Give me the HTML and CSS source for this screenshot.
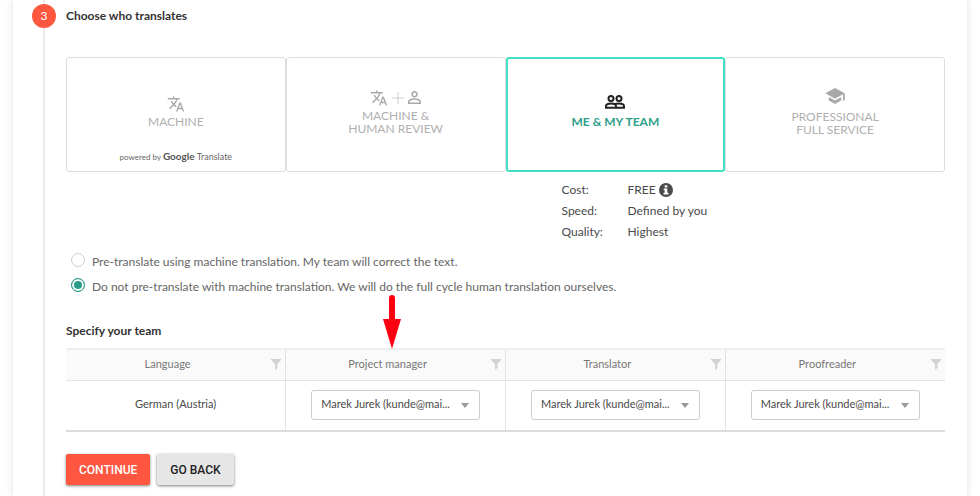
FILE: index.html
```html
<!DOCTYPE html>
<html lang="en">
<head>
    <meta charset="utf-8">
    <title>Choose who translates</title>
    <link rel="stylesheet" href="styles.css">
</head>
<body>
    <svg class="symbols" aria-hidden="true">
        <symbol id="icon-translate" viewBox="0 0 24 24">
            <path d="M12.87 15.07l-2.54-2.51.03-.03A17.5 17.5 0 0 0 14.07 6H17V4h-7V2H8v2H1v2h11.17C11.5 7.92 10.44 9.75 9 11.35 8.07 10.32 7.3 9.19 6.69 8h-2c.73 1.63 1.73 3.17 2.98 4.56l-5.09 5.02L4 19l5-5 3.11 3.11.76-2.04zM18.5 10h-2L12 22h2l1.12-3h4.75L21 22h2l-4.5-12zm-2.62 7l1.62-4.33L19.12 17h-3.24z"/>
        </symbol>
        <symbol id="icon-filter" viewBox="0 0 10 11">
            <path d="M0 0h10v1L6.500 5v4L4 11V5L0 1z"/>
        </symbol>
    </svg>
    <main class="panel">
        <section class="step">
            <span class="step-number">3</span>
            <h2 class="step-title">Choose who translates</h2>

            <div class="options">
                <button type="button" class="option">
                    <span class="option-icons">
                        <svg class="icon" viewBox="0 0 24 24"><use href="#icon-translate"/></svg>
                    </span>
                    <span>MACHINE</span>
                    <span class="powered">powered by <span class="google">Google</span> <span class="translate">Translate</span></span>
                </button>
                <button type="button" class="option">
                    <span class="option-icons">
                        <svg class="icon" viewBox="0 0 24 24"><use href="#icon-translate"/></svg>
                        <svg class="plus" viewBox="0 0 12 12"><path d="M6 0v12M0 6h12"/></svg>
                        <svg class="person" viewBox="4 4 16 16"><path d="M12 5.900a2.100 2.100 0 1 1 0 4.200 2.100 2.100 0 0 1 0-4.200m0 9c2.970 0 6.100 1.460 6.100 2.100v1.100H5.900V17c0-.64 3.130-2.100 6.100-2.100M12 4C9.790 4 8 5.790 8 8s1.790 4 4 4 4-1.790 4-4-1.790-4-4-4zm0 9c-2.670 0-8 1.340-8 4v3h16v-3c0-2.660-5.330-4-8-4z"/></svg>
                    </span>
                    <span>MACHINE &amp;<br>HUMAN REVIEW</span>
                </button>
                <button type="button" class="option selected" aria-pressed="true">
                    <span class="option-icons">
                        <svg class="people" viewBox="0 0 20 14">
                            <circle cx="6" cy="3.500" r="2.500"/>
                            <circle cx="14" cy="3.500" r="2.500"/>
                            <path d="M1 12.700v-1.500c0-1.500 2-2.700 5-2.700s5 1.200 5 2.700v1.500zM9.500 9.200c1-.5 2.500-.7 4.500-.7 3 0 5 1.200 5 2.700v1.500h-8"/>
                        </svg>
                    </span>
                    <span>ME &amp; MY TEAM</span>
                </button>
                <button type="button" class="option">
                    <span class="option-icons">
                        <svg class="cap" viewBox="1 3 22 18"><path d="M5 13.180v4L12 21l7-3.820v-4L12 17l-7-3.820zM12 3L1 9l11 6 9-4.910V17h2V9L12 3z"/></svg>
                    </span>
                    <span>PROFESSIONAL<br>FULL SERVICE</span>
                </button>

                <dl class="details">
                    <dt>Cost:</dt>
                    <dd>FREE <svg class="info" viewBox="0 0 14 14"><circle cx="7" cy="7" r="7"/><path d="M5.700 2.300h2.600v2.200H5.700zM4.700 5.500h3.600v4.300h1.200v1.700h-5V9.800h1.200V7.200h-1z"/></svg></dd>
                    <dt>Speed:</dt>
                    <dd>Defined by you</dd>
                    <dt>Quality:</dt>
                    <dd>Highest</dd>
                </dl>
            </div>

            <div class="choices">
                <label class="choice"><input type="radio" name="pretranslate"> Pre-translate using machine translation. My team will correct the text.</label>
                <label class="choice"><input type="radio" name="pretranslate" checked> Do not pre-translate with machine translation. We will do the full cycle human translation ourselves.</label>
            </div>

            <div class="team">
                <h3 class="team-title">Specify your team</h3>
                <svg class="pointer" viewBox="0 0 18 54"><path d="M9 3v24" stroke="#ff0010" stroke-width="6" stroke-linecap="round"/><path d="M0 24h18L9 54z" fill="#ff0010"/></svg>
                <table class="team-table">
                    <thead>
                        <tr>
                            <th><div class="head">Language <svg class="filter"><use href="#icon-filter"/></svg></div></th>
                            <th><div class="head"><span id="manager">Project manager</span> <svg class="filter"><use href="#icon-filter"/></svg></div></th>
                            <th><div class="head"><span id="translator">Translator</span> <svg class="filter"><use href="#icon-filter"/></svg></div></th>
                            <th><div class="head"><span id="proofreader">Proofreader</span> <svg class="filter"><use href="#icon-filter"/></svg></div></th>
                        </tr>
                    </thead>
                    <tbody>
                        <tr>
                            <td>German (Austria)</td>
                            <td><div class="picker"><select aria-labelledby="manager"><option>Marek Jurek (kunde@mai...</option></select></div></td>
                            <td><div class="picker"><select aria-labelledby="translator"><option>Marek Jurek (kunde@mai...</option></select></div></td>
                            <td><div class="picker"><select aria-labelledby="proofreader"><option>Marek Jurek (kunde@mai...</option></select></div></td>
                        </tr>
                    </tbody>
                </table>
            </div>

            <div class="actions">
                <button type="button" class="btn primary">CONTINUE</button>
                <button type="button" class="btn">GO BACK</button>
            </div>
        </section>
    </main>
</body>
</html>
```
FILE: styles.css
```css
* { box-sizing: border-box; }
body { margin: 0; font-family: Lato, "Liberation Sans", sans-serif; font-size: 12px; line-height: 16px; color: #4a4a4a; background: #fff; }
h2, h3, dl, dd { margin: 0; }
button, select { font-family: inherit; }
.symbols { display: none; }

.panel { min-height: 100vh; margin: 0 13px; padding: 0 22px 0 30px; background: #fff; box-shadow: 0 0 8px rgba(0, 0, 0, 0.12); }
.step { position: relative; min-height: 100vh; padding: 8px 0 8px 21px; border-left: 2px solid #ebebeb; }
.step-number { position: absolute; left: -13px; top: 4px; width: 24px; height: 24px; border-radius: 50%; background: #ff5640; color: #fff; line-height: 24px; text-align: center; }
.step-title, .team-title { font-size: 12px; line-height: 16px; font-weight: bold; color: #333; }

/* service options */
.options { display: grid; grid-template-columns: repeat(4, 1fr); margin-top: 33px; }
.option { position: relative; display: flex; flex-direction: column; align-items: center; justify-content: center; height: 115px; padding: 0 0 6px; background: #fff; border: 1px solid #ddd; border-radius: 3px; color: #b0b0b0; font-size: 12px; line-height: 13px; cursor: pointer; }
.option.selected { border: 2px solid #3fe0c3; color: #2f9f8b; font-weight: bold; }
.option-icons { display: flex; align-items: center; gap: 4px; margin-bottom: 2px; }
.option svg { fill: #a8aaaa; }
.icon { width: 18px; height: 18px; }
.person { width: 13px; height: 13px; }
.option .plus { width: 12px; height: 12px; stroke: #ccc; fill: none; }
.option .people { width: 20px; height: 14px; margin-bottom: 4px; fill: none; stroke: #222; stroke-width: 2; }
.cap { width: 20px; height: 16px; margin-bottom: 4px; }
.powered { position: absolute; left: 0; right: 0; bottom: 7px; font-size: 8px; line-height: 14px; color: #666; }
.google { font-size: 10px; color: #555; font-weight: bold; }
.translate { font-size: 9px; }

.details { grid-column: 3; display: grid; grid-template-columns: 66px 1fr; margin-top: 7px; padding-left: 56px; line-height: 21px; white-space: nowrap; }
.info { width: 14px; height: 14px; vertical-align: -3px; fill: #4a4a4a; }
.info path { fill: #fff; }

.choices { display: flex; flex-direction: column; gap: 7px; margin-top: 11px; }
.choice { display: flex; align-items: center; gap: 7px; color: #666; }
.choice input { appearance: none; width: 14px; height: 14px; margin: 0 0 4px 5px; border: 1px solid #ccc; border-radius: 50%; }
.choice input:checked { border-color: #2a9d8a; background: #2a9d8a; box-shadow: inset 0 0 0 2px #fff; }

/* team table */
.team { position: relative; margin-top: 27px; }
.team-title { margin-bottom: 9px; }
.pointer { position: absolute; left: 317px; top: -28px; width: 18px; height: 54px; }
.team-table { width: 100%; table-layout: fixed; border-collapse: collapse; border-top: 2px solid #eee; border-bottom: 2px solid #ddd; text-align: center; }
.team-table th, .team-table td { padding: 0; border-left: 1px solid #e2e2e2; }
.team-table th:first-child, .team-table td:first-child { border-left: none; }
.team-table th { height: 31px; padding-bottom: 2px; background: #fafafa; border-bottom: 1px solid #e2e2e2; font-size: 11px; font-weight: normal; color: #777; }
.team-table td { height: 51px; font-size: 11px; }
.team-table td:first-child { padding-bottom: 2px; }
.head { position: relative; padding-right: 16px; }
.filter { position: absolute; right: 4px; top: 3px; width: 10px; height: 11px; fill: #d2d2d2; }
.picker { position: relative; margin: 0 25px; }
.picker::after { content: ""; position: absolute; right: 11px; top: 13px; border: 4px solid transparent; border-top: 5px solid #999; border-bottom: 0; pointer-events: none; }
.picker select { display: block; appearance: none; width: 100%; height: 30px; padding: 0 20px 4px 9px; border: 1px solid #ccc; border-radius: 3px; background: #fff; color: #4a4a4a; font-size: 11px; }

.actions { display: flex; gap: 7px; margin-top: 22px; }
.btn { height: 31px; padding: 0 13px; border: 0; border-radius: 2px; background: #e6e6e6; color: #222; font-family: Roboto, sans-serif; font-size: 12px; font-weight: 500; box-shadow: 0 1px 3px rgba(0, 0, 0, 0.5); cursor: pointer; }
.btn.primary { background: #ff5640; color: #fff; }
```
